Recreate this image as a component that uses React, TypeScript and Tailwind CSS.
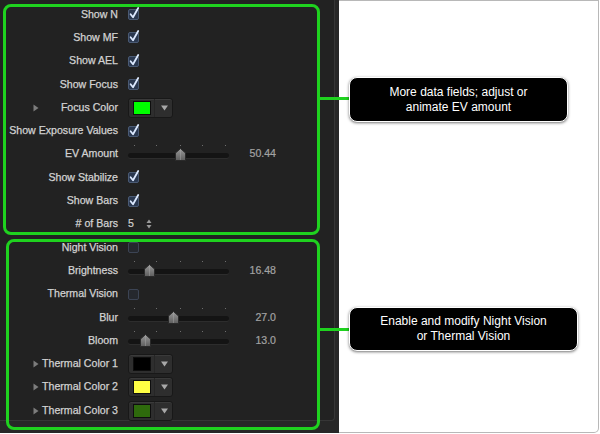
import React from "react";

type Row =
  | { kind: "check"; label: string; checked: boolean }
  | { kind: "color"; label: string; color: string }
  | { kind: "slider"; label: string; pos: number; value: string }
  | { kind: "stepper"; label: string; value: string };

const rows: Row[] = [
  { kind: "check", label: "Show N", checked: true },
  { kind: "check", label: "Show MF", checked: true },
  { kind: "check", label: "Show AEL", checked: true },
  { kind: "check", label: "Show Focus", checked: true },
  { kind: "color", label: "Focus Color", color: "#00ff00" },
  { kind: "check", label: "Show Exposure Values", checked: true },
  { kind: "slider", label: "EV Amount", pos: 52.5, value: "50.44" },
  { kind: "check", label: "Show Stabilize", checked: true },
  { kind: "check", label: "Show Bars", checked: true },
  { kind: "stepper", label: "# of Bars", value: "5" },
  { kind: "check", label: "Night Vision", checked: false },
  { kind: "slider", label: "Brightness", pos: 21.5, value: "16.48" },
  { kind: "check", label: "Thermal Vision", checked: false },
  { kind: "slider", label: "Blur", pos: 45, value: "27.0" },
  { kind: "slider", label: "Bloom", pos: 17.5, value: "13.0" },
  { kind: "color", label: "Thermal Color 1", color: "#000000" },
  { kind: "color", label: "Thermal Color 2", color: "#ffff44" },
  { kind: "color", label: "Thermal Color 3", color: "#2e6a0c" },
];

function Checkbox({ checked }: { checked: boolean }) {
  return (
    <div className="relative w-[11px] h-[11px]">
      <div
        className={
          checked
            ? "w-[11px] h-[11px] rounded-[2px] bg-[#2a3850] border border-[#4a5a74]"
            : "w-[11px] h-[11px] rounded-[2px] bg-[#25282e] border border-[#3c4454]"
        }
      />
      {checked && (
        <svg className="absolute left-[0px] top-[-3px]" width="13" height="14" viewBox="0 0 13 14">
          <path d="M2.6 8.2 L5 11.2 L10.2 2" fill="none" stroke="#dce9ff" strokeWidth="1.8" strokeLinecap="round" strokeLinejoin="round" />
        </svg>
      )}
    </div>
  );
}

function ColorWell({ color }: { color: string }) {
  return (
    <div className="flex items-center w-[45px] h-[20px] rounded-[3px] bg-[#2e2e2e] border border-[#181818] shadow-[inset_0_1px_0_rgba(255,255,255,0.06)]">
      <div className="ml-[4px] w-[18px] h-[14px] border border-[#0e0e0e]" style={{ backgroundColor: color }} />
      <div className="ml-[3px] h-full w-[1px] bg-[#262626]" />
      <svg className="ml-[6px]" width="7" height="6" viewBox="0 0 7 6">
        <path d="M0 0.5 H7 L3.5 5.5 Z" fill="#a8a8a8" />
      </svg>
    </div>
  );
}

function Slider({ pos, value }: { pos: number; value: string }) {
  return (
    <div className="flex items-center h-full">
      <div className="relative w-[101px] h-full">
        <div className="absolute left-[6px] top-[2px] w-[1px] h-[1px] bg-[#6e6e6e]" />
        <div className="absolute left-[28px] top-[2px] w-[1px] h-[1px] bg-[#6e6e6e]" />
        <div className="absolute left-[52px] top-[2px] w-[1px] h-[1px] bg-[#6e6e6e]" />
        <div className="absolute left-[74px] top-[2px] w-[1px] h-[1px] bg-[#6e6e6e]" />
        <div className="absolute left-[97px] top-[2px] w-[1px] h-[1px] bg-[#6e6e6e]" />
        <div className="absolute left-0 right-0 top-[10px] h-[5px] rounded-full bg-[#141414] shadow-[0_1px_0_rgba(255,255,255,0.05)]" />
        <svg className="absolute top-[5px]" style={{ left: pos - 5.5 }} width="11" height="13" viewBox="0 0 11 13">
          <defs>
            <linearGradient id="thg" x1="0" y1="0" x2="0" y2="1">
              <stop offset="0" stopColor="#9a9a9a" />
              <stop offset="1" stopColor="#5e5e5e" />
            </linearGradient>
          </defs>
          <path d="M0.5 5 L5.5 0.5 L10.5 5 V12.5 H0.5 Z" fill="url(#thg)" stroke="#2a2a2a" strokeWidth="1" />
          <path d="M5.5 2 V12" stroke="#b0b0b0" strokeWidth="0.8" opacity="0.5" />
        </svg>
      </div>
      <span className="w-[47px] text-right text-[#a2a2a2] [-webkit-text-stroke:0.2px_#a2a2a2]">{value}</span>
    </div>
  );
}

function Stepper({ value }: { value: string }) {
  return (
    <div className="flex items-center">
      <span className="text-[#d0d0d0] [-webkit-text-stroke:0.2px_#d0d0d0]">{value}</span>
      <svg className="ml-[12px]" width="6" height="10" viewBox="0 0 6 10">
        <path d="M0.5 4 L3 0.5 L5.5 4 Z" fill="#9a9a9a" />
        <path d="M0.5 6 L3 9.5 L5.5 6 Z" fill="#9a9a9a" />
      </svg>
    </div>
  );
}

function RowView({ row }: { row: Row }) {
  return (
    <div className="flex items-center h-[23.3px]">
      <div className="flex items-center w-[118px]">
        {row.kind === "color" && (
          <svg className="ml-[33px]" width="6" height="8" viewBox="0 0 6 8">
            <path d="M0.5 0.5 L5.5 4 L0.5 7.5 Z" fill="#7c7c7c" />
          </svg>
        )}
        <span className="flex-1 text-right text-[#d2d2d2] whitespace-nowrap [-webkit-text-stroke:0.25px_#d2d2d2]">{row.label}</span>
      </div>
      <div className="ml-[10px] flex items-center h-full">
        {row.kind === "check" && <Checkbox checked={row.checked} />}
        {row.kind === "color" && <ColorWell color={row.color} />}
        {row.kind === "slider" && <Slider pos={row.pos} value={row.value} />}
        {row.kind === "stepper" && <Stepper value={row.value} />}
      </div>
    </div>
  );
}

function Callout({ lines }: { lines: string[] }) {
  return (
    <div className="flex flex-col items-center justify-center h-full rounded-[8px] bg-black border-[1.5px] border-white shadow-[0_1px_3px_rgba(0,0,0,0.55)] text-white text-[12px] leading-[15px]">
      {lines.map((l) => (
        <span key={l}>{l}</span>
      ))}
    </div>
  );
}

export default function App() {
  return (
    <div className="relative flex w-[600px] h-[434px] bg-white font-['Liberation_Sans',Arial,sans-serif]">
      <div className="w-[339px] h-[433px] bg-[#272727]">
        <div className="w-[335px] h-[421px] bg-[#222222] border-r border-b border-[#363636] rounded-br-[4px] pt-[3px] text-[10.6px]">
          {rows.map((r) => (
            <RowView key={r.label} row={r} />
          ))}
        </div>
      </div>
      <div className="w-[260px] h-[433px] bg-white border-t border-r border-b border-[#b8b8b8] rounded-br-[5px]" />

      {/* annotation boxes */}
      <div className="absolute left-[3px] top-[4px] w-[317px] h-[231px] rounded-[8px] border-[3px] border-[#1fd21f]" />
      <div className="absolute left-[6px] top-[239px] w-[314px] h-[191px] rounded-[8px] border-[3px] border-[#1fd21f]" />
      <div className="absolute left-[319px] top-[97px] w-[31px] h-[3px] bg-[#1fd21f]" />
      <div className="absolute left-[319px] top-[328px] w-[31px] h-[3px] bg-[#1fd21f]" />

      <div className="absolute left-[349px] top-[77px] w-[219px] h-[45px]">
        <Callout lines={["More data fields; adjust or", "animate EV amount"]} />
      </div>
      <div className="absolute left-[349px] top-[307px] w-[229px] h-[44px]">
        <Callout lines={["Enable and modify Night Vision", "or Thermal Vision"]} />
      </div>
    </div>
  );
}
